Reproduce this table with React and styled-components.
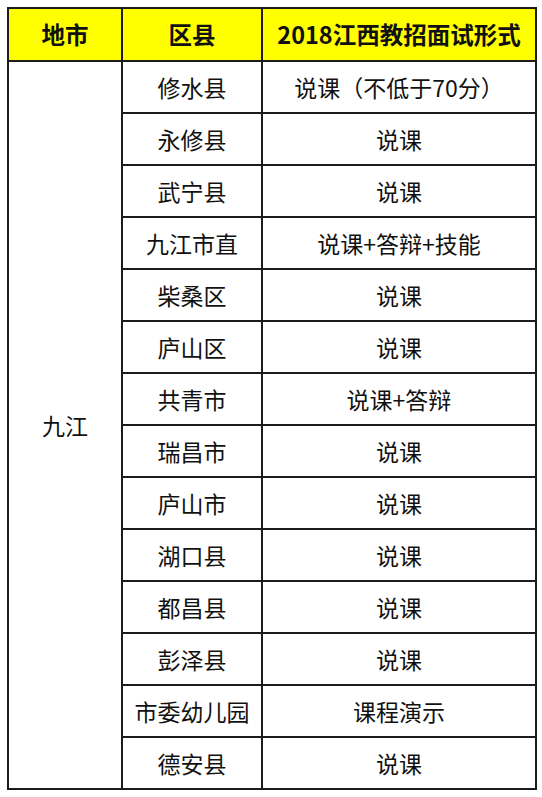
import React from 'react'
import styled, { createGlobalStyle } from 'styled-components'

const GlobalStyle = createGlobalStyle`
  html, body {
    margin: 0;
    padding: 0;
    background: #ffffff;
  }
  body {
    font-family: "Noto Sans CJK SC", "Noto Sans", sans-serif;
  }
`

const Page = styled.div`
  padding: 7px 0 0 7px;
  width: 542px;
  box-sizing: border-box;
`

const Table = styled.table`
  border-collapse: collapse;
  width: 528px;
  table-layout: fixed;
  color: #111;
`

const HeadCell = styled.th`
  height: 51px;
  background: #ffff00;
  border: 2px solid #1c1c1c;
  font-size: 23.5px;
  font-weight: 700;
  text-align: center;
  vertical-align: middle;
  padding: 0;
  line-height: 1;
`

const Cell = styled.td`
  height: 50px;
  border: 2px solid #1c1c1c;
  font-size: 23px;
  font-weight: 400;
  text-align: center;
  vertical-align: middle;
  padding: 0;
  line-height: 1;
`

const rows = [
  ['修水县', '说课（不低于70分）'],
  ['永修县', '说课'],
  ['武宁县', '说课'],
  ['九江市直', '说课+答辩+技能'],
  ['柴桑区', '说课'],
  ['庐山区', '说课'],
  ['共青市', '说课+答辩'],
  ['瑞昌市', '说课'],
  ['庐山市', '说课'],
  ['湖口县', '说课'],
  ['都昌县', '说课'],
  ['彭泽县', '说课'],
  ['市委幼儿园', '课程演示'],
  ['德安县', '说课']
]

export default function App () {
  return (
    <Page>
      <GlobalStyle />
      <Table>
        <colgroup>
          <col style={{ width: 114 }} />
          <col style={{ width: 140 }} />
          <col style={{ width: 274 }} />
        </colgroup>
        <thead>
          <tr>
            <HeadCell>地市</HeadCell>
            <HeadCell>区县</HeadCell>
            <HeadCell>2018江西教招面试形式</HeadCell>
          </tr>
        </thead>
        <tbody>
          {rows.map(([county, form], i) => (
            <tr key={county}>
              {i === 0 && <Cell rowSpan={rows.length}>九江</Cell>}
              <Cell>{county}</Cell>
              <Cell>{form}</Cell>
            </tr>
          ))}
        </tbody>
      </Table>
    </Page>
  )
}
